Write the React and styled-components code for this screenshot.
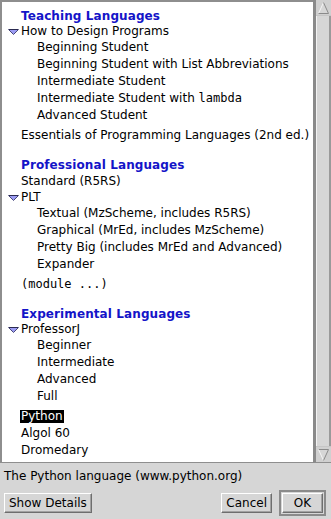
import React from "react";
import styled, { createGlobalStyle } from "styled-components";

const GlobalStyle = createGlobalStyle`
  html, body {
    margin: 0;
    padding: 0;
    background: #d6d6d6;
  }
  body {
    font-family: "DejaVu Sans", "Liberation Sans", sans-serif;
    font-size: 12px;
    color: #000;
  }
`;

const Dialog = styled.div`
  width: 331px;
  height: 519px;
  display: flex;
  flex-direction: column;
  background: #d6d6d6;
  overflow: hidden;
`;

const ListArea = styled.div`
  height: 463px;
  display: flex;
  flex-shrink: 0;
`;

const ListBox = styled.div`
  flex: 1;
  background: #fff;
  border-left: 2px solid #8e8e8e;
  border-top: 2px solid #8e8e8e;
  border-bottom: 1px solid #8e8e8e;
  padding-top: 6px;
  overflow: hidden;
`;

const Section = styled.div`
  & + & {
    margin-top: 13px;
  }
`;

const Heading = styled.div`
  padding-left: 19px;
  height: 16px;
  line-height: 16px;
  font-weight: bold;
  color: #1414c8;
  letter-spacing: 0.1px;
  white-space: nowrap;
`;

const Row = styled.div`
  display: flex;
  align-items: center;
  height: ${p => (p.$twisty ? 15 : 17)}px;
  line-height: ${p => (p.$twisty ? 15 : 17)}px;
  padding-left: ${p => p.$indent - (p.$twisty ? 13 : 0)}px;
  margin-top: ${p => (p.$gap ? 3 : 0)}px;
  white-space: nowrap;
`;

const Label = styled.span`
  padding: 0 1px;
  margin-left: -1px;
  line-height: 13px;
  background: ${p => (p.$selected ? "#000" : "transparent")};
  color: ${p => (p.$selected ? "#fff" : "#000")};
`;

const Code = styled.span`
  font-family: "DejaVu Sans Mono", "Liberation Mono", monospace;
  font-size: 12px;
`;

const Twisty = styled.svg`
  width: 11px;
  height: 6px;
  margin-right: 2px;
  flex-shrink: 0;
`;

const Scrollbar = styled.div`
  width: 15px;
  display: flex;
  flex-direction: column;
  background: #c6c6c6;
  border-left: 3px solid #8a8a8a;
  border-bottom: 1px solid #8e8e8e;
`;

const ArrowButton = styled.div`
  height: 15px;
  display: flex;
  align-items: center;
  justify-content: center;
  flex-shrink: 0;
  background: #d0d0d0;
`;

const Thumb = styled.div`
  flex: 1;
  background: #d6d6d6;
  border-left: 1px solid #f2f2f2;
  border-right: 2px solid #9a9a9a;
  margin: 1px 0;
`;

const Status = styled.div`
  padding: 5px 4px 0;
  height: 17px;
  line-height: 17px;
  white-space: nowrap;
`;

const ButtonRow = styled.div`
  display: flex;
  align-items: center;
  padding: 5px 5px 0 4px;
`;

const Spacer = styled.div`
  flex: 1;
`;

const Button = styled.button`
  font-family: "DejaVu Sans", "Liberation Sans", sans-serif;
  font-size: 12px;
  color: #000;
  background: #d6d6d6;
  height: 20px;
  min-width: ${p => p.$minWidth || 0}px;
  padding: 0 4px;
  margin: 0;
  border: 1px solid;
  border-color: #ffffff #6e6e6e #6e6e6e #ffffff;
  box-shadow: inset -1px -1px 0 #a2a2a2;
  line-height: 17px;
  cursor: pointer;
`;

const DefaultFrame = styled.div`
  display: flex;
  margin-left: 7px;
  border: 2px solid #8a8a8a;
  padding: 1px;
  background: #d6d6d6;
`;

const sections = [
  {
    title: "Teaching Languages",
    items: [
      {
        label: "How to Design Programs",
        children: [
          { label: "Beginning Student" },
          { label: "Beginning Student with List Abbreviations" },
          { label: "Intermediate Student" },
          { label: "Intermediate Student with ", code: "lambda" },
          { label: "Advanced Student" },
        ],
      },
      { label: "Essentials of Programming Languages (2nd ed.)" },
    ],
  },
  {
    title: "Professional Languages",
    items: [
      { label: "Standard (R5RS)" },
      {
        label: "PLT",
        children: [
          { label: "Textual (MzScheme, includes R5RS)" },
          { label: "Graphical (MrEd, includes MzScheme)" },
          { label: "Pretty Big (includes MrEd and Advanced)" },
          { label: "Expander" },
        ],
      },
      { code: "(module ...)" },
    ],
  },
  {
    title: "Experimental Languages",
    items: [
      {
        label: "ProfessorJ",
        children: [
          { label: "Beginner" },
          { label: "Intermediate" },
          { label: "Advanced" },
          { label: "Full" },
        ],
      },
      { label: "Python", selected: true },
      { label: "Algol 60" },
      { label: "Dromedary" },
    ],
  },
];

function OpenTriangle() {
  return (
    <Twisty viewBox="0 0 11 6">
      <polygon points="0.5,0.5 10.5,0.5 5.5,5.5" fill="#9c9cf4" stroke="#4a4a7a" strokeWidth="1" />
      <line x1="1" y1="0.5" x2="10" y2="0.5" stroke="#2a2a50" strokeWidth="1" />
    </Twisty>
  );
}

function ItemLabel({ item }) {
  return (
    <Label $selected={item.selected}>
      {item.label}
      {item.code && <Code>{item.code}</Code>}
    </Label>
  );
}

function ScrollArrow({ down }) {
  return (
    <ArrowButton>
      <svg width="11" height="12" viewBox="0 0 11 12">
        {down ? (
          <>
            <polygon points="0.5,0.5 10.5,0.5 5.5,11.5" fill="#d6d6d6" />
            <polyline points="0.5,0.5 10.5,0.5" stroke="#8a8a8a" fill="none" />
            <polyline points="0.5,0.5 5.5,11.5" stroke="#f4f4f4" fill="none" />
            <polyline points="10.5,0.5 5.5,11.5" stroke="#8a8a8a" fill="none" />
          </>
        ) : (
          <>
            <polygon points="5.5,0.5 10.5,11.5 0.5,11.5" fill="#d6d6d6" />
            <polyline points="5.5,0.5 0.5,11.5" stroke="#f4f4f4" fill="none" />
            <polyline points="5.5,0.5 10.5,11.5 0.5,11.5" stroke="#8a8a8a" fill="none" />
          </>
        )}
      </svg>
    </ArrowButton>
  );
}

function LanguageTree() {
  return (
    <ListBox>
      {sections.map(section => (
        <Section key={section.title}>
          <Heading>{section.title}</Heading>
          {section.items.map((item, i) => {
            const prev = section.items[i - 1];
            const afterGroup = prev && prev.children;
            if (item.children) {
              return (
                <React.Fragment key={item.label}>
                  <Row $indent={19} $twisty $gap={afterGroup}>
                    <OpenTriangle />
                    <ItemLabel item={item} />
                  </Row>
                  {item.children.map(child => (
                    <Row key={child.label} $indent={35}>
                      <ItemLabel item={child} />
                    </Row>
                  ))}
                </React.Fragment>
              );
            }
            return (
              <Row key={item.label || item.code} $indent={19} $gap={afterGroup}>
                <ItemLabel item={item} />
              </Row>
            );
          })}
        </Section>
      ))}
    </ListBox>
  );
}

export default function App() {
  return (
    <>
      <GlobalStyle />
      <Dialog>
        <ListArea>
          <LanguageTree />
          <Scrollbar>
            <ScrollArrow />
            <Thumb />
            <ScrollArrow down />
          </Scrollbar>
        </ListArea>
        <Status>The Python language (www.python.org)</Status>
        <ButtonRow>
          <Button>Show Details</Button>
          <Spacer />
          <Button>Cancel</Button>
          <DefaultFrame>
            <Button $minWidth={41}>OK</Button>
          </DefaultFrame>
        </ButtonRow>
      </Dialog>
    </>
  );
}
